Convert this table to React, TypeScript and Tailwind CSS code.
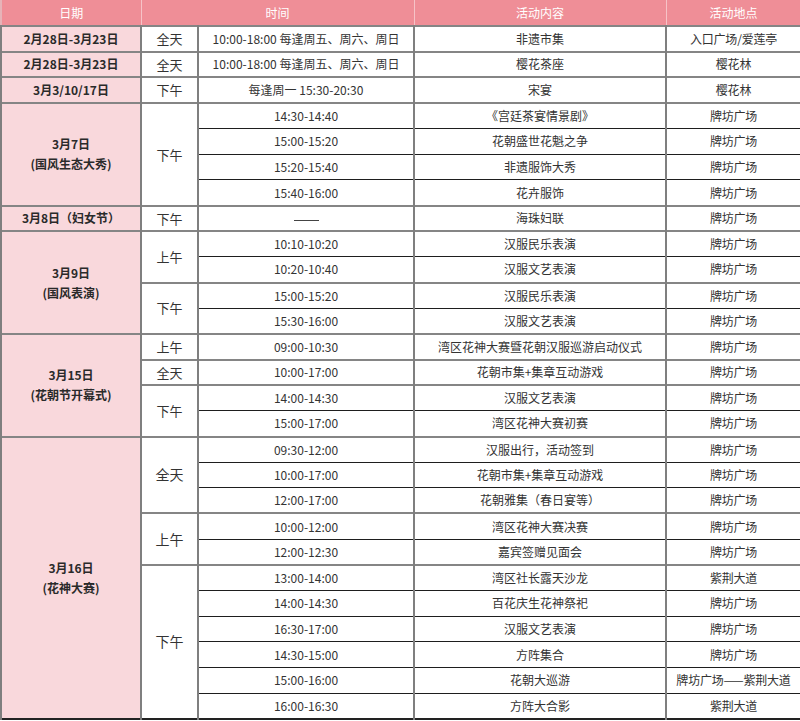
import React from 'react';

type Item = { time: string; act: string; place: string };
type Period = { label: string; big?: boolean; items: Item[] };
type Group = { date: string[]; periods: Period[] };

const PF = '牌坊广场';

const groups: Group[] = [
  { date: ['2月28日-3月23日'], periods: [{ label: '全天', items: [{ time: '10:00-18:00 每逢周五、周六、周日', act: '非遗市集', place: '入口广场/爱莲亭' }] }] },
  { date: ['2月28日-3月23日'], periods: [{ label: '全天', items: [{ time: '10:00-18:00 每逢周五、周六、周日', act: '樱花茶座', place: '樱花林' }] }] },
  { date: ['3月3/10/17日'], periods: [{ label: '下午', items: [{ time: '每逢周一  15:30-20:30', act: '宋宴', place: '樱花林' }] }] },
  {
    date: ['3月7日', '(国风生态大秀)'],
    periods: [
      {
        label: '下午',
        items: [
          { time: '14:30-14:40', act: '《宫廷茶宴情景剧》', place: PF },
          { time: '15:00-15:20', act: '花朝盛世花魁之争', place: PF },
          { time: '15:20-15:40', act: '非遗服饰大秀', place: PF },
          { time: '15:40-16:00', act: '花卉服饰', place: PF },
        ],
      },
    ],
  },
  { date: ['3月8日（妇女节）'], periods: [{ label: '下午', items: [{ time: '——', act: '海珠妇联', place: PF }] }] },
  {
    date: ['3月9日', '(国风表演)'],
    periods: [
      {
        label: '上午',
        items: [
          { time: '10:10-10:20', act: '汉服民乐表演', place: PF },
          { time: '10:20-10:40', act: '汉服文艺表演', place: PF },
        ],
      },
      {
        label: '下午',
        items: [
          { time: '15:00-15:20', act: '汉服民乐表演', place: PF },
          { time: '15:30-16:00', act: '汉服文艺表演', place: PF },
        ],
      },
    ],
  },
  {
    date: ['3月15日', '(花朝节开幕式)'],
    periods: [
      { label: '上午', items: [{ time: '09:00-10:30', act: '湾区花神大赛暨花朝汉服巡游启动仪式', place: PF }] },
      { label: '全天', items: [{ time: '10:00-17:00', act: '花朝市集+集章互动游戏', place: PF }] },
      {
        label: '下午',
        items: [
          { time: '14:00-14:30', act: '汉服文艺表演', place: PF },
          { time: '15:00-17:00', act: '湾区花神大赛初赛', place: PF },
        ],
      },
    ],
  },
  {
    date: ['3月16日', '(花神大赛)'],
    periods: [
      {
        label: '全天',
        big: true,
        items: [
          { time: '09:30-12:00', act: '汉服出行，活动签到', place: PF },
          { time: '10:00-17:00', act: '花朝市集+集章互动游戏', place: PF },
          { time: '12:00-17:00', act: '花朝雅集（春日宴等）', place: PF },
        ],
      },
      {
        label: '上午',
        big: true,
        items: [
          { time: '10:00-12:00', act: '湾区花神大赛决赛', place: PF },
          { time: '12:00-12:30', act: '嘉宾签赠见面会', place: PF },
        ],
      },
      {
        label: '下午',
        big: true,
        items: [
          { time: '13:00-14:00', act: '湾区社长露天沙龙', place: '紫荆大道' },
          { time: '14:00-14:30', act: '百花庆生花神祭祀', place: PF },
          { time: '16:30-17:00', act: '汉服文艺表演', place: PF },
          { time: '14:30-15:00', act: '方阵集合', place: PF },
          { time: '15:00-16:00', act: '花朝大巡游', place: '牌坊广场——紫荆大道' },
          { time: '16:00-16:30', act: '方阵大合影', place: '紫荆大道' },
        ],
      },
    ],
  },
];

const cell = 'border-x-2 border-x-[#7f7f7f] text-center align-middle p-0 whitespace-nowrap';
const topGroup = 'border-t-2 border-t-[#858585]';
const topInner = 'border-t border-t-[#1e1e1e]';

export default function App() {
  const rows: React.ReactNode[] = [];
  groups.forEach((g, gi) => {
    const total = g.periods.reduce((n, p) => n + p.items.length, 0);
    g.periods.forEach((p, pi) => {
      p.items.forEach((it, ii) => {
        const first = pi === 0 && ii === 0;
        const rowTop = ii === 0 ? topGroup : topInner;
        rows.push(
          <tr key={`${gi}-${pi}-${ii}`} className="h-[25.66px]">
            {first && (
              <td rowSpan={total} className={`${cell} ${topGroup} bg-[#f9d8dc] font-bold text-[12px] leading-[20px] text-[#2a2a2a]`}>
                {g.date.map((d) => (
                  <div key={d}>{d}</div>
                ))}
              </td>
            )}
            {ii === 0 && (
              <td rowSpan={p.items.length} className={`${cell} ${topGroup} ${p.big ? 'text-[14px]' : 'text-[13px]'} text-[#333]`}>
                {p.label}
              </td>
            )}
            <td className={`${cell} ${rowTop} text-[12px] text-[#333]`}>
              {it.time === '——' ? <span className="inline-block w-[25px] h-px align-middle bg-[#444]" /> : it.time}
            </td>
            <td className={`${cell} ${rowTop} text-[12px] text-[#333]`}>{it.act}</td>
            <td className={`${cell} ${rowTop} text-[12px] text-[#333] tracking-[-0.2px]`}>{it.place}</td>
          </tr>
        );
      });
    });
  });

  return (
    <div className="w-[800px] h-[721px] overflow-hidden bg-white" style={{ fontFamily: '"Noto Sans CJK SC", "Noto Sans", sans-serif' }}>
      <table className="w-[800px] table-fixed border-collapse border-b-2 border-b-[#222] border-l-2 border-l-[#e6b3b8]">
        <colgroup>
          <col className="w-[140px]" />
          <col className="w-[57px]" />
          <col className="w-[216px]" />
          <col className="w-[252px]" />
          <col className="w-[135px]" />
        </colgroup>
        <thead>
          <tr className="h-[26px] bg-[#ef8e97] text-[12px] text-white">
            <th className="border-x border-x-[#f6c3c7] font-normal">日期</th>
            <th colSpan={2} className="border-x border-x-[#f6c3c7] font-normal">时间</th>
            <th className="border-x border-x-[#f6c3c7] font-normal">活动内容</th>
            <th className="border-x border-x-[#f6c3c7] font-normal">活动地点</th>
          </tr>
        </thead>
        <tbody>{rows}</tbody>
      </table>
    </div>
  );
}
